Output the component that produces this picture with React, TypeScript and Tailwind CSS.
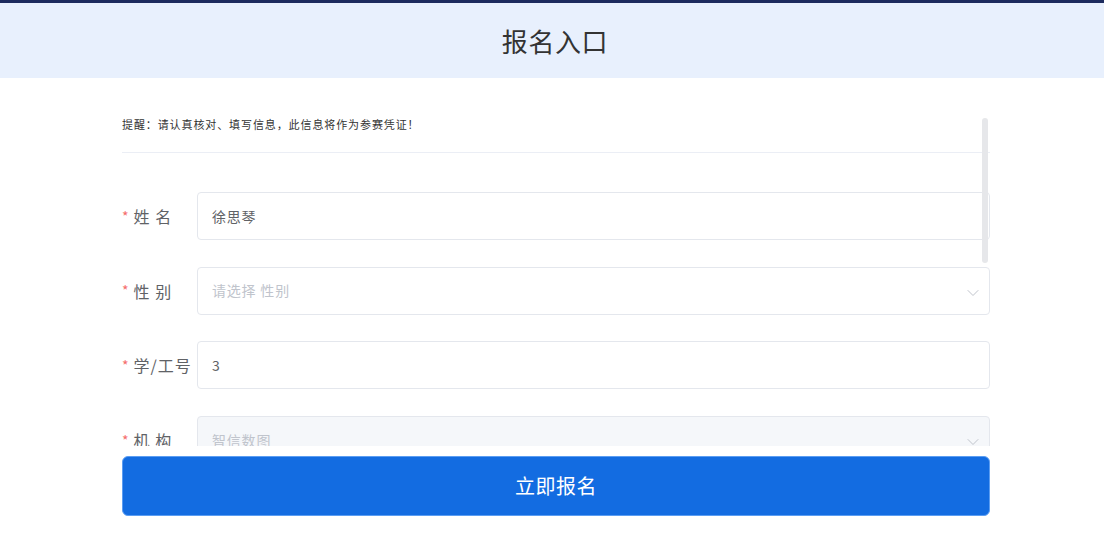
import { ChevronDown } from "lucide-react";

const font = { fontFamily: '"Noto Sans CJK SC", "Noto Sans", sans-serif' };

type Row = {
  label: string;
  value?: string;
  placeholder?: string;
  select?: boolean;
  disabled?: boolean;
};

const rows: Row[] = [
  { label: "姓 名", value: "徐思琴" },
  { label: "性 别", placeholder: "请选择 性别", select: true },
  { label: "学/工号", value: "3" },
  { label: "机 构", placeholder: "智信数图", select: true, disabled: true },
];

function FormRow({ row }: { row: Row }) {
  return (
    <div className="flex items-center">
      <label className="flex w-[75px] shrink-0 items-center text-[16px] tracking-[1px] text-[#606266]">
        <span className="mr-[4px] text-[14px] text-[#f56c6c]">*</span>
        <span className="whitespace-pre">{row.label}</span>
      </label>
      <div
        className={`relative flex h-[48px] flex-1 items-center rounded-[4px] border px-[14px] text-[14px] tracking-[0.8px] ${
          row.disabled
            ? "border-[#e4e7ed] bg-[#f5f7fa]"
            : "border-[#e4e7ed] bg-white"
        }`}
      >
        {row.value ? (
          <span className="text-[#606266]">{row.value}</span>
        ) : (
          <span className="text-[#c0c4cc]">{row.placeholder}</span>
        )}
        {row.select && (
          <ChevronDown
            className="absolute right-[6px] top-[15px] h-[20px] w-[20px] text-[#c0c4cc]"
            strokeWidth={1.2}
          />
        )}
      </div>
    </div>
  );
}

export default function App() {
  return (
    <div className="h-[536px] w-full overflow-hidden bg-white" style={font}>
      <div className="h-[3px] bg-[#1c2b5e]" />
      <header className="flex h-[75px] items-center justify-center bg-[#e8f0fd]">
        <h1 className="pl-[6px] text-[26px] tracking-[0.6px] text-[#333333]">报名入口</h1>
      </header>

      <div className="ml-[122px] w-[868px]">
        <div className="relative mt-[32px] h-[336px] overflow-hidden">
          <div className="border-b border-[#ebeef5] pb-[20px] pt-[6px] text-[11px] leading-[16px] tracking-[0.9px] text-[#333333]">
            提醒：请认真核对、填写信息，此信息将作为参赛凭证！
          </div>
          <div className="mt-[39px] flex flex-col gap-[26.7px]">
            {rows.map((r) => (
              <FormRow key={r.label} row={r} />
            ))}
          </div>
          <div className="absolute right-[2px] top-[8px] h-[145px] w-[6px] rounded-full bg-[#e6e7ea]" />
        </div>

        <button className="mt-[10px] flex h-[60px] w-full items-center justify-center rounded-[6px] border border-[#5b9df2] bg-[#136ce1] text-[20px] tracking-[0.5px] text-white">
          立即报名
        </button>
      </div>
    </div>
  );
}
